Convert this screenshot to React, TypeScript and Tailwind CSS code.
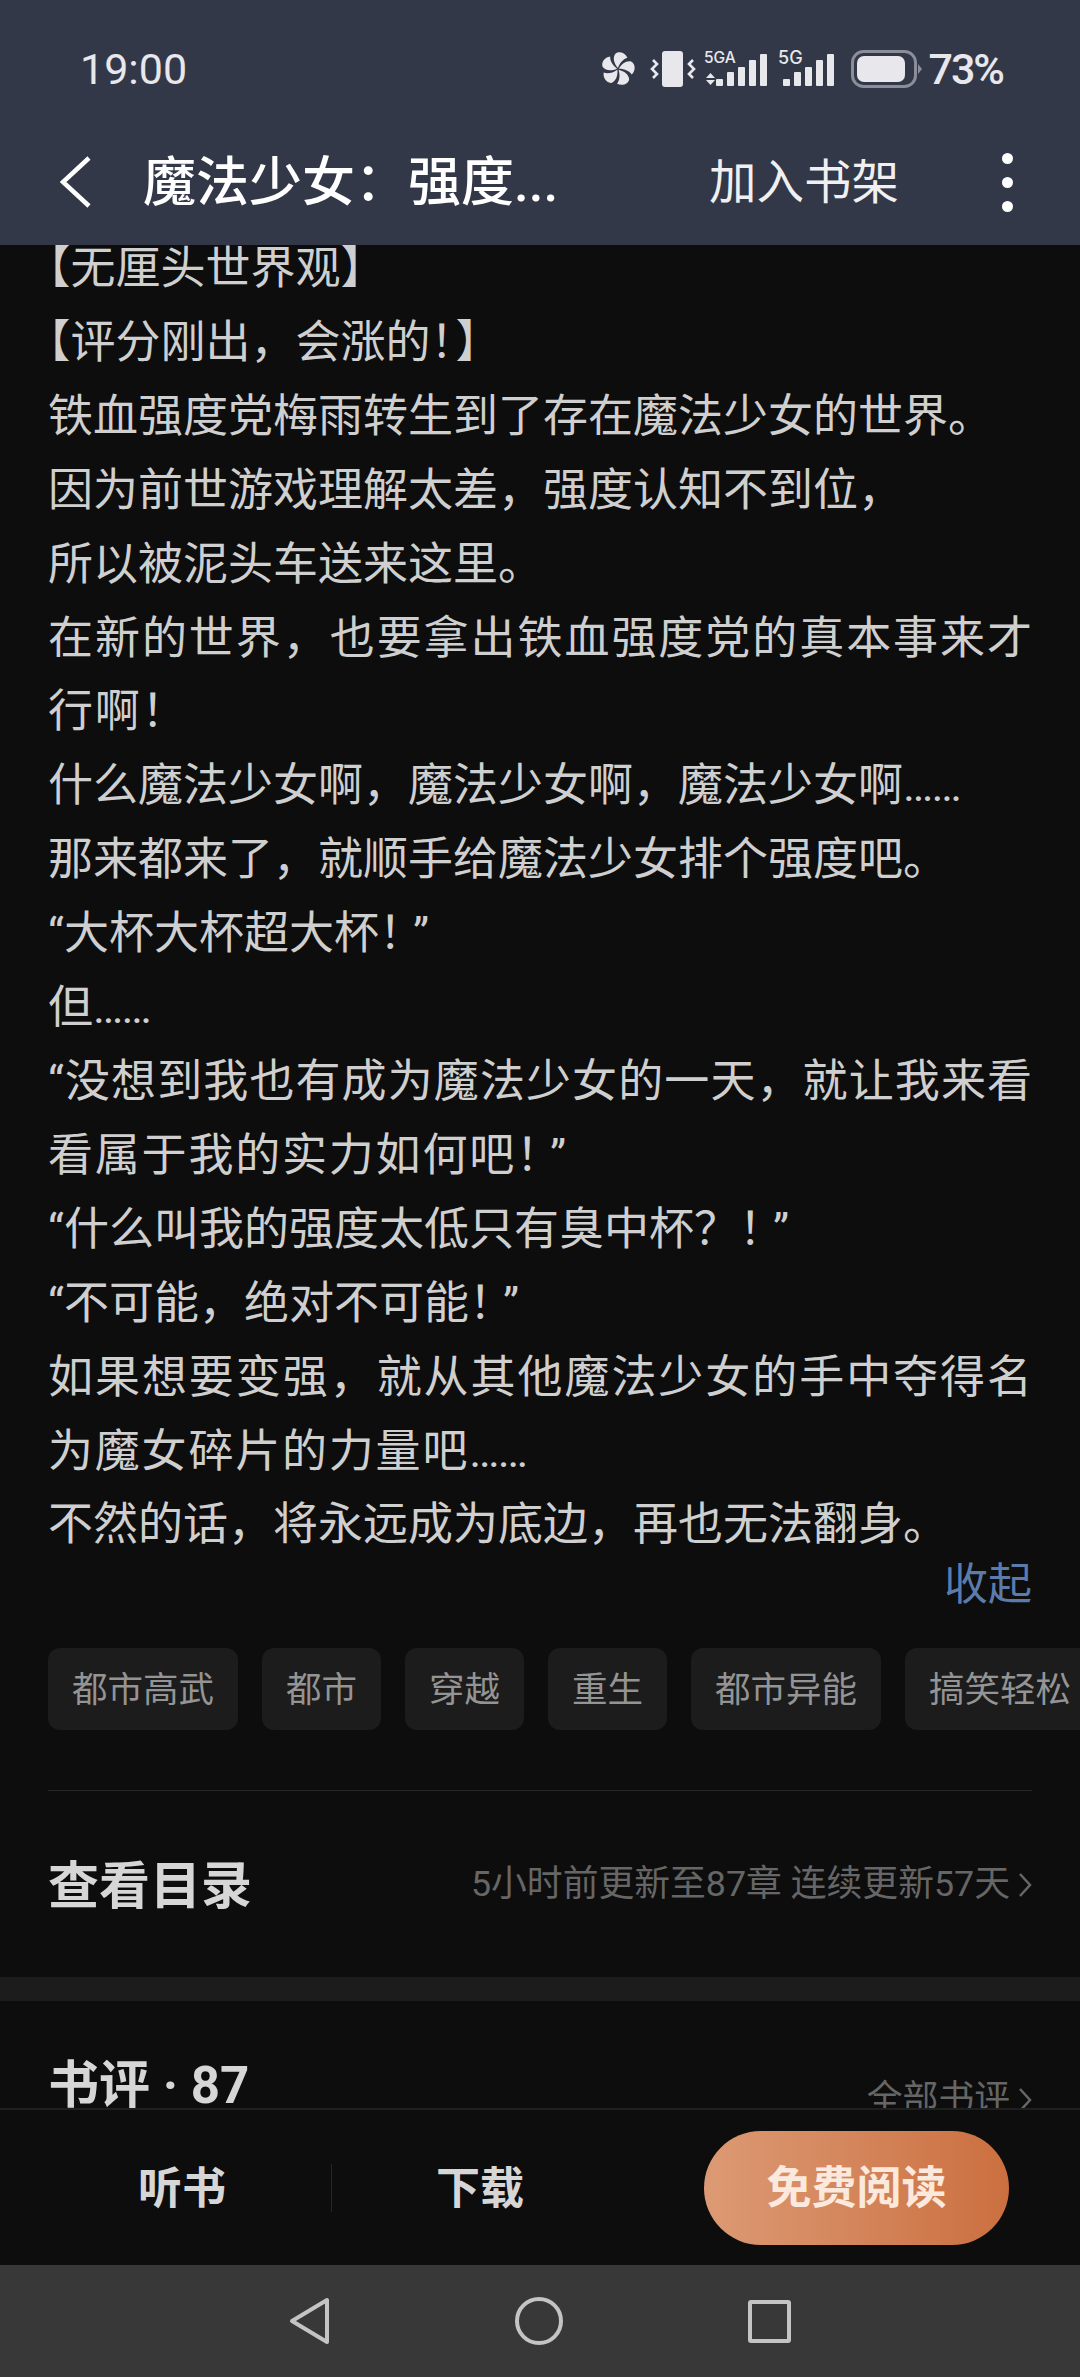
import type { ReactNode } from "react";

const FONT = "font-['Roboto','Noto_Sans_CJK_SC',sans-serif]";

const PLAIN = "";
const FILL = "[text-align-last:justify]";
const SPREAD = "tracking-[1.8px]";

const LINES: [string, string][] = [
  ["【无厘头世界观】", PLAIN],
  ["【评分刚出\uFF0C会涨的\uFF01】", PLAIN],
  ["铁血强度党梅雨转生到了存在魔法少女的世界。", PLAIN],
  ["因为前世游戏理解太差\uFF0C强度认知不到位\uFF0C", PLAIN],
  ["所以被泥头车送来这里。", PLAIN],
  ["在新的世界\uFF0C也要拿出铁血强度党的真本事来才", FILL],
  ["行啊\uFF01", SPREAD],
  ["什么魔法少女啊\uFF0C魔法少女啊\uFF0C魔法少女啊……", PLAIN],
  ["那来都来了\uFF0C就顺手给魔法少女排个强度吧。", PLAIN],
  ["“大杯大杯超大杯\uFF01”", PLAIN],
  ["但……", PLAIN],
  ["“没想到我也有成为魔法少女的一天\uFF0C就让我来看", FILL],
  ["看属于我的实力如何吧\uFF01”", SPREAD],
  ["“什么叫我的强度太低只有臭中杯\uFF1F\uFF01”", PLAIN],
  ["“不可能\uFF0C绝对不可能\uFF01”", PLAIN],
  ["如果想要变强\uFF0C就从其他魔法少女的手中夺得名", FILL],
  ["为魔女碎片的力量吧……", SPREAD],
  ["不然的话\uFF0C将永远成为底边\uFF0C再也无法翻身。", PLAIN],
];

const TAGS = ["都市高武", "都市", "穿越", "重生", "都市异能", "搞笑轻松"];

function tight(line: string): ReactNode[] {
  return line.split(/(\uFF01(?=[”】])|……)/).map((part, i) => {
    if (part === "\uFF01") {
      const cls = line.endsWith("】") ? "tracking-[-20px]" : "tracking-[-11px]";
      return <span key={i} className={cls}>{part}</span>;
    }
    if (part === "……") {
      return <span key={i} className="tracking-[-1.5px]">{part}</span>;
    }
    return part;
  });
}

function Fan() {
  return (
    <svg width="34" height="36" viewBox="-18 -19 36 38" fill="#e8e8ec">
      {[0, 72, 144, 216, 288].map((a) => (
        <path key={a} transform={`rotate(${a})`} d="M0 -1 C-4 -6 -6 -11 -3 -16 C0 -19 7 -18 10 -12 C6 -11 2 -7 0 -1Z" />
      ))}
    </svg>
  );
}

function Vibrate() {
  return (
    <svg width="46" height="36" viewBox="0 0 46 36" fill="none">
      <rect x="12" y="0" width="21" height="36" rx="3" fill="#e8e8ec" />
      <path d="M3 9 L7 13 L2 18 L7 23 L3 27" stroke="#e8e8ec" strokeWidth="2.6" />
      <path d="M43 9 L39 13 L44 18 L39 23 L43 27" stroke="#e8e8ec" strokeWidth="2.6" />
    </svg>
  );
}

function Bars({ x }: { x: number }) {
  const heights = [7, 14, 19, 26, 32];
  return (
    <g>
      {heights.map((h, i) => (
        <rect key={i} x={x + i * 11} y={36 - h} width="7" height={h} rx="1" />
      ))}
    </g>
  );
}

function Signal5GA() {
  return (
    <svg width="64" height="38" viewBox="0 0 64 38" fill="#e8e8ec">
      <text x="0" y="13" fontSize="15.5" fontFamily="Inter, sans-serif" fontWeight="500">5GA</text>
      <path d="M2 28 L6.5 23 L11 28Z" />
      <path d="M2 30 L6.5 35 L11 30Z" />
      <Bars x={12} />
    </svg>
  );
}

function Signal5G() {
  return (
    <svg width="56" height="38" viewBox="0 0 56 38" fill="#e8e8ec">
      <text x="0" y="14" fontSize="18" fontFamily="Inter, sans-serif" fontWeight="500">5G</text>
      <Bars x={5} />
    </svg>
  );
}

function Battery() {
  return (
    <svg width="72" height="38" viewBox="0 0 72 38" fill="none">
      <rect x="1.5" y="1.5" width="63" height="35" rx="11" stroke="#8b8e9a" strokeWidth="3" />
      <rect x="6" y="6" width="48" height="26" rx="7" fill="#e8e8ec" />
      <path d="M67 14 L71 19 L67 24Z" fill="#8b8e9a" />
    </svg>
  );
}

function Chevron() {
  return (
    <svg width="14" height="26" viewBox="0 0 14 26" fill="none">
      <path d="M2 2 L12 13 L2 24" stroke="#666666" strokeWidth="2.5" />
    </svg>
  );
}

export default function App() {
  return (
    <div className={`${FONT} flex h-[2377px] w-[1080px] flex-col overflow-hidden bg-[#0d0d0d]`}>
      <header className="h-[245px] shrink-0 bg-[#333849]">
        <div className="flex h-[119px] items-center pt-[19px] pl-[80px] pr-[77px] text-[#e8e8ec]">
          <span className="text-[43px] leading-none font-normal">19:00</span>
          <div className="ml-auto flex items-center">
            <Fan />
            <div className="ml-[15px]"><Vibrate /></div>
            <div className="ml-[8px]"><Signal5GA /></div>
            <div className="ml-[10px]"><Signal5G /></div>
            <div className="ml-[17px]"><Battery /></div>
            <span className="ml-[5px] text-[43px] leading-none font-medium tracking-[-2px]">73%</span>
          </div>
        </div>
        <div className="flex h-[126px] items-center pl-[60px] pr-[67px] text-white">
          <svg width="31" height="52" viewBox="0 0 31 52" fill="none">
            <path d="M29 2 L3 26 L29 50" stroke="#ffffff" strokeWidth="4.5" />
          </svg>
          <h1 className="mt-[3px] ml-[52px] text-[53px] leading-none font-medium whitespace-nowrap">{"魔法少女\uFF1A强度..."}</h1>
          <span className="mt-[3px] ml-auto text-[47.5px] leading-none text-[#f0f0f0]">加入书架</span>
          <div className="ml-[103px] flex flex-col gap-[13px]">
            <span className="h-[11px] w-[11px] rounded-full bg-white" />
            <span className="h-[11px] w-[11px] rounded-full bg-white" />
            <span className="h-[11px] w-[11px] rounded-full bg-white" />
          </div>
        </div>
      </header>

      <main className="min-h-0 flex-1 overflow-hidden">
        <div className="-mt-[13px] px-[48px] text-[45px] leading-[73.9px] text-[#cfcfcf] [text-spacing-trim:trim-start]">
          {LINES.map(([text, cls]) => (
            <p key={text} className={cls}>{tight(text)}</p>
          ))}
        </div>
        <div className="mt-[2px] px-[48px] text-right text-[44px] leading-[42px] text-[#5b7cab]">收起</div>
        <div className="mt-[42px] flex gap-[24px] pl-[48px]">
          {TAGS.map((t) => (
            <span key={t} className="flex h-[82px] shrink-0 items-center rounded-[12px] bg-[#1c1c1c] px-[24px] pt-[3px] text-[35.5px] text-[#949494]">{t}</span>
          ))}
        </div>
        <div className="mx-[48px] mt-[60px] h-px bg-[#262626]" />
        <div className="flex h-[186px] items-center justify-between px-[48px]">
          <span className="mt-[4px] text-[51px] leading-none font-bold text-[#d6d6d6]">查看目录</span>
          <span className="mt-[2px] flex items-center gap-[8px] text-[35.8px] leading-none text-[#666666]">
            5小时前更新至87章 连续更新57天
            <Chevron />
          </span>
        </div>
        <div className="h-[24px] bg-[#1c1c1c]" />
        <div className="flex items-start justify-between px-[48px] pt-[59px]">
          <span className="text-[51px] leading-none font-bold text-[#d6d6d6]">书评 · 87</span>
          <span className="mt-[22px] flex items-center gap-[8px] text-[35.8px] leading-none text-[#666666]">
            全部书评
            <Chevron />
          </span>
        </div>
      </main>

      <div className="flex h-[157px] shrink-0 items-center border-t-2 border-[#1f1f1f] bg-[#0d0d0d] pl-[33px]">
        <span className="w-[298px] pt-[3px] text-center text-[44px] leading-none font-bold text-[#d6d6d6]">听书</span>
        <span className="h-[48px] w-px bg-[#262626]" />
        <span className="w-[296px] pt-[3px] text-center text-[44px] leading-none font-bold text-[#d6d6d6]">下载</span>
        <button className="ml-[76px] flex h-[114px] w-[305px] items-center justify-center rounded-full bg-gradient-to-r from-[#dc9a74] to-[#cb6f3f] pt-[3px] text-[45px] font-bold text-[#fbe9de]">免费阅读</button>
      </div>

      <nav className="flex h-[112px] shrink-0 items-center gap-[185px] bg-[#383838] pl-[289px]">
        <svg width="41" height="48" viewBox="0 0 41 48" fill="none">
          <path d="M38 3 L38 45 L3 24 Z" stroke="#c4c4c4" strokeWidth="4" strokeLinejoin="round" />
        </svg>
        <span className="h-[48px] w-[48px] rounded-full border-4 border-[#c4c4c4]" />
        <span className="h-[43px] w-[43px] rounded-[3px] border-4 border-[#c4c4c4]" />
      </nav>
    </div>
  );
}
